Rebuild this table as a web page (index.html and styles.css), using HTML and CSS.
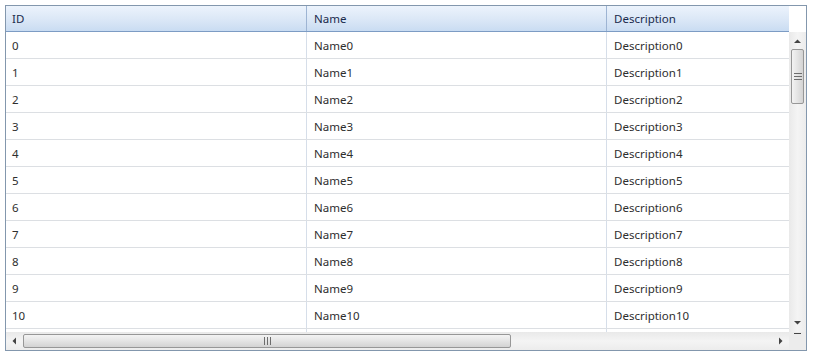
FILE: index.html
```html
<!DOCTYPE html>
<html>
<head>
<meta charset="utf-8">
<link rel="stylesheet" href="styles.css">
</head>
<body>
<div class="grid">
  <div class="main">
    <div class="head">
      <div class="hc">ID</div>
      <div class="hc">Name</div>
      <div class="hc last">Description</div>
    </div>
    <div class="row"><div class="c">0</div><div class="c">Name0</div><div class="c last">Description0</div></div>
    <div class="row"><div class="c">1</div><div class="c">Name1</div><div class="c last">Description1</div></div>
    <div class="row"><div class="c">2</div><div class="c">Name2</div><div class="c last">Description2</div></div>
    <div class="row"><div class="c">3</div><div class="c">Name3</div><div class="c last">Description3</div></div>
    <div class="row"><div class="c">4</div><div class="c">Name4</div><div class="c last">Description4</div></div>
    <div class="row"><div class="c">5</div><div class="c">Name5</div><div class="c last">Description5</div></div>
    <div class="row"><div class="c">6</div><div class="c">Name6</div><div class="c last">Description6</div></div>
    <div class="row"><div class="c">7</div><div class="c">Name7</div><div class="c last">Description7</div></div>
    <div class="row"><div class="c">8</div><div class="c">Name8</div><div class="c last">Description8</div></div>
    <div class="row"><div class="c">9</div><div class="c">Name9</div><div class="c last">Description9</div></div>
    <div class="row"><div class="c">10</div><div class="c">Name10</div><div class="c last">Description10</div></div>
    <div class="row"><div class="c"></div><div class="c"></div><div class="c last"></div></div>
  </div>
  <div class="vcol">
    <div class="vtop"></div>
    <div class="vscroll">
      <svg class="arr" width="17" height="17" viewBox="0 0 17 17"><path d="M5 11 L12 11 L8.5 7.5 Z" fill="#444"/></svg>
      <div class="vthumb">
        <svg width="8" height="7" viewBox="0 0 8 7"><path d="M0 0.5H8M0 3.5H8M0 6.5H8" stroke="#6d6d6d" stroke-width="1"/></svg>
      </div>
      <div class="vspace"></div>
      <svg class="arr" width="17" height="17" viewBox="0 0 17 17"><path d="M5 6 L12 6 L8.5 9.5 Z" fill="#444"/></svg>
    </div>
  </div>
  <div class="hscroll">
    <svg class="arr" width="17" height="18" viewBox="0 0 17 18"><path d="M10 5.5 L10 12.5 L6.5 9 Z" fill="#444"/></svg>
    <div class="hthumb">
      <svg width="7" height="8" viewBox="0 0 7 8"><path d="M0.5 0V8M3.5 0V8M6.5 0V8" stroke="#6d6d6d" stroke-width="1"/></svg>
    </div>
    <div class="hspace"></div>
    <svg class="arr" width="17" height="18" viewBox="0 0 17 18"><path d="M7 5.5 L7 12.5 L10.5 9 Z" fill="#444"/></svg>
  </div>
  <div class="corner">
    <svg width="17" height="18" viewBox="0 0 17 18"><path d="M5 1.5H12" stroke="#444" stroke-width="1"/></svg>
  </div>
</div>
</body>
</html>
```

FILE: styles.css
```css
html, body {
  margin: 0;
  padding: 0;
  background: #ffffff;
}
body {
  font-family: "Noto Sans", "Open Sans", sans-serif;
  font-size: 11.5px;
  color: #2e2e2e;
}
.grid {
  margin: 5px 0 0 5px;
  width: 800px;
  height: 344px;
  border: 1px solid #8397ad;
  display: grid;
  grid-template-columns: 783px 17px;
  grid-template-rows: 326px 18px;
  background: #ffffff;
}
.main {
  overflow: hidden;
  grid-column: 1;
  grid-row: 1;
}
.head {
  display: grid;
  grid-template-columns: 301px 300px 182px;
  height: 25px;
  border-bottom: 1px solid #7d9cc4;
  background: linear-gradient(#ecf3fc, #d9e6f6 60%, #c9dcf2);
}
.hc {
  display: flex;
  align-items: center;
  padding-left: 6px;
  border-right: 1px solid #9db4d3;
  color: #1a2b4d;
}
.hc + .hc { padding-left: 7px; }
.hc.last { border-right: none; }
.row {
  display: grid;
  grid-template-columns: 301px 300px 182px;
  height: 26px;
  border-bottom: 1px solid #dcdfe3;
}
.c {
  display: flex;
  align-items: center;
  padding-left: 6px;
  border-right: 1px solid #d6dee9;
}
.c + .c { padding-left: 7px; }
.c.last { border-right: none; }
.vcol {
  grid-column: 2;
  grid-row: 1;
  display: flex;
  flex-direction: column;
}
.vtop {
  height: 26px;
  background: #ffffff;
}
.vscroll {
  flex: 1;
  display: flex;
  flex-direction: column;
  align-items: center;
  background: linear-gradient(90deg, #e9e9e9, #f4f4f4 50%, #ececec);
}
.arr { display: block; flex: none; }
.vthumb {
  width: 13px;
  height: 55px;
  box-sizing: border-box;
  border: 1px solid #979797;
  border-radius: 2px;
  background: linear-gradient(90deg, #f3f3f3, #e4e4e4 50%, #d3d3d3);
  display: flex;
  align-items: center;
  justify-content: center;
}
.vspace { flex: 1; }
.hscroll {
  grid-column: 1;
  grid-row: 2;
  display: flex;
  align-items: center;
  background: linear-gradient(#e9e9e9, #f4f4f4 50%, #ececec);
}
.hthumb {
  width: 488px;
  height: 14px;
  box-sizing: border-box;
  border: 1px solid #979797;
  border-radius: 2px;
  background: linear-gradient(#f3f3f3, #e4e4e4 50%, #d3d3d3);
  display: flex;
  align-items: center;
  justify-content: center;
}
.hspace { flex: 1; }
.corner {
  grid-column: 2;
  grid-row: 2;
  background: #ececec;
}
.corner svg { display: block; }
```
